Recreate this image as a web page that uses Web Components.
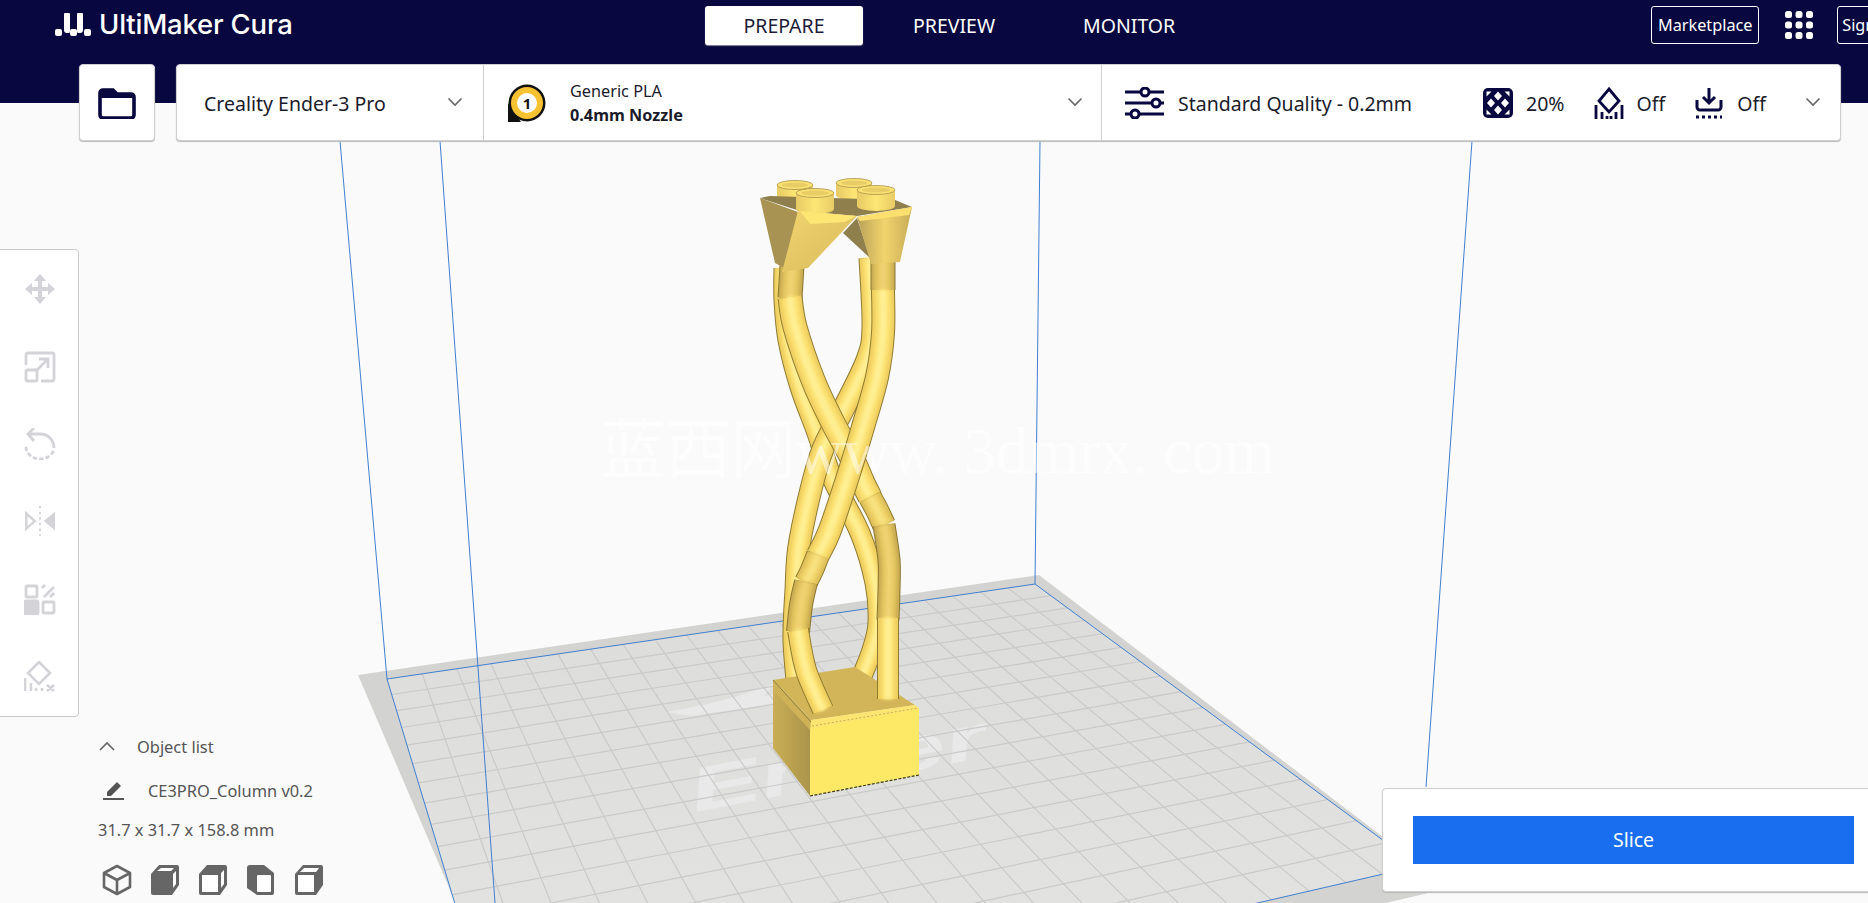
<!DOCTYPE html>
<html lang="en">
<head>
<meta charset="utf-8">
<title>UltiMaker Cura</title>
<style>
  html, body { margin: 0; height: 100%; overflow: hidden; background: #fafafa; }
</style>
</head>
<body>
<cura-app></cura-app>
<script>
const NAVY = '#08073f'

const ICONS = {
  folder: `<svg width="38" height="32" viewBox="0 0 38 32"><path d="M2 6a3 3 0 0 1 3-3h10l4 4h14a3 3 0 0 1 3 3v18a3 3 0 0 1-3 3H5a3 3 0 0 1-3-3z" fill="#fff" stroke="${NAVY}" stroke-width="3.6"/><path d="M2 6a3 3 0 0 1 3-3h10l4 4h14a3 3 0 0 1 3 3v1H2z" fill="${NAVY}"/></svg>`,
  chevron: `<svg width="16" height="10" viewBox="0 0 16 10"><path d="M1.5 1.5 8 8l6.5-6.5" fill="none" stroke="#666" stroke-width="1.6"/></svg>`,
  extruder: `<svg width="40" height="40" viewBox="0 0 40 40"><path d="M1 20v19h13z" fill="#111"/><circle cx="20" cy="20" r="18.500" fill="#111"/><circle cx="20" cy="20" r="16" fill="#f6c232"/><circle cx="20" cy="20" r="10" fill="#fff"/><text x="20" y="25.500" text-anchor="middle" font-family="Noto Sans" font-size="15" font-weight="700" fill="#111">1</text></svg>`,
  sliders: `<svg width="40" height="32" viewBox="0 0 40 32" fill="none" stroke="${NAVY}" stroke-width="3"><path d="M0 5h15M25 5h14M0 16h26M35 16h4M0 27h5M15 27h24"/><circle cx="20" cy="5" r="4"/><circle cx="31" cy="16" r="4"/><circle cx="10" cy="27" r="4"/></svg>`,
  infill: `<svg width="30" height="30" viewBox="0 0 30 30"><rect width="30" height="30" rx="5" fill="${NAVY}"/><g fill="#fff"><path d="M15 3.500l4 4.500-4 4.500-4-4.500zM15 17.500l4 4.500-4 4.500-4-4.500zM8 10.500l4 4.500-4 4.500-4-4.500zM22 10.500l4 4.500-4 4.500-4-4.500z"/><path d="M3.500 3.500h5l-5 5zM26.500 3.500h-5l5 5zM3.500 26.500h5l-5-5zM26.500 26.500h-5l5-5z"/></g></svg>`,
  support: `<svg width="30" height="32" viewBox="0 0 30 32" fill="none" stroke="${NAVY}" stroke-width="2.800"><path d="M15 2 25 14 15 25 5 14z"/><path d="M2 18v14M28 18v14M8 25v7M22 25v7M13 29v3M17 29v3"/></svg>`,
  adhesion: `<svg width="30" height="32" viewBox="0 0 30 32" fill="none" stroke="${NAVY}" stroke-width="3"><path d="M15 1v14M9 10l6 6 6-6"/><path d="M3 13v7a3 3 0 0 0 3 3h18a3 3 0 0 0 3-3v-7"/><path d="M2 30h26" stroke-dasharray="3 3"/></svg>`,
  apps: `<svg width="30" height="30" viewBox="0 0 30 30" fill="#fff"><rect x="1" y="1" width="7" height="7" rx="2.500"/><rect x="11.500" y="1" width="7" height="7" rx="2.500"/><rect x="22" y="1" width="7" height="7" rx="2.500"/><rect x="1" y="11.500" width="7" height="7" rx="2.500"/><rect x="11.500" y="11.500" width="7" height="7" rx="2.500"/><rect x="22" y="11.500" width="7" height="7" rx="2.500"/><rect x="1" y="22" width="7" height="7" rx="2.500"/><rect x="11.500" y="22" width="7" height="7" rx="2.500"/><rect x="22" y="22" width="7" height="7" rx="2.500"/></svg>`,
  move: `<svg viewBox="0 0 32 32" fill="#d3d3d8"><path d="M16 1l6 7h-4v6h6v-4l7 6-7 6v-4h-6v6h4l-6 7-6-7h4v-6H8v4l-7-6 7-6v4h6V8h-4z"/></svg>`,
  scale: `<svg viewBox="0 0 32 32" fill="none" stroke="#d3d3d8" stroke-width="2.800"><path d="M2 14V4a2 2 0 0 1 2-2h24a2 2 0 0 1 2 2v24a2 2 0 0 1-2 2H17"/><rect x="2" y="19" width="11" height="11" rx="1.500"/><path d="M13 19 24 8M15 8h9v9"/></svg>`,
  rotate: `<svg viewBox="0 0 32 32" fill="none" stroke="#d3d3d8" stroke-width="2.800"><path d="M30 20C30 12 24 6 16 6H5"/><path d="M10 0 4 6l6 7"/><path d="M2 20c1 6 7 11 14 11s12-4 14-9" stroke-dasharray="2 4.500" stroke-linecap="round"/></svg>`,
  mirror: `<svg viewBox="0 0 34 32" fill="#d3d3d8"><path d="M11.500 16 2.500 8v16z" fill="none" stroke="#d3d3d8" stroke-width="2.600"/><path d="M21 16 33 6v20z"/><path d="M17 0v32" stroke="#d3d3d8" stroke-width="2" stroke-dasharray="2.500 3.500"/></svg>`,
  permodel: `<svg viewBox="0 0 32 32" fill="none" stroke="#d3d3d8" stroke-width="2.800"><rect x="2" y="3" width="11" height="11" rx="1"/><path d="M20 14 30 4M18 5l3-3M26 14l4-4"/><rect x="1" y="18" width="13" height="13" rx="1" fill="#d3d3d8"/><rect x="19" y="19" width="11" height="11" rx="1"/></svg>`,
  blocker: `<svg viewBox="0 0 32 32" fill="none" stroke="#d3d3d8" stroke-width="2.600"><path d="M15 1 26 12 15 23 4 12z"/><path d="M1 17v13M7 22v8M12 27v3M18 27v3M23 24l7 6M30 24l-7 6"/></svg>`,
  pencil: `<svg width="22" height="20" viewBox="0 0 22 20"><path d="M4 12 14 2l4 4L8 16H4z" fill="#555"/><path d="M0 19h21" stroke="#555" stroke-width="2"/></svg>`
}

function cube (face) {
  if (face === 'iso') {
    return `<svg width="30" height="32" viewBox="0 0 30 32" fill="none" stroke="#666" stroke-width="2.600" stroke-linejoin="round"><path d="M15 2 28 9v14l-13 7-13-7V9zM2 9l13 7 13-7M15 16v14"/></svg>`
  }
  if (face === 'left') {
    return `<svg width="30" height="32" viewBox="0 0 30 32"><path d="M1 4q0-3 3-3h14l10 8v20q0 2-2 2H11L1 24z" fill="#666"/><rect x="11" y="11" width="14" height="17" rx="1" fill="#fff"/></svg>`
  }
  const white = {
    front: 'M7 7l4-3h13l-3 3zM23 10l3-3v13l-3 4z',
    top: 'M4 11h16v17H4zM23 9l3-3v14l-3 4z',
    right: 'M4 11h16v17H4zM10 4h15l-3 4H6z'
  }[face]
  return `<svg width="30" height="32" viewBox="0 0 30 32"><path d="M1 10 9 1h18q2 0 2 2v18l-7 10H3q-2 0-2-2z" fill="#666"/><path d="${white}" fill="#fff"/></svg>`
}

class CuraHeader extends HTMLElement {
  connectedCallback () {
    this.attachShadow({ mode: 'open' }).innerHTML = `
      <style>
        :host { display: block; height: 103px; background: ${NAVY}; color: #fff; font-family: "Noto Sans", sans-serif; position: relative; z-index: 2; }
        .top { display: flex; align-items: center; height: 50px; }
        .top > * { flex: none; }
        .logo { display: flex; align-items: center; gap: 8px; margin-left: 55px; width: 650px; font: 500 27.500px Inter, sans-serif; letter-spacing: -.2px; }
        .logo span { position: relative; top: -1px; }
        nav { display: flex; font-size: 19.500px; }
        nav a { display: flex; align-items: center; justify-content: center; height: 39px; border-radius: 3px; }
        nav a:nth-child(1) { width: 158px; background: #fff; color: #1c1c3a; margin-right: 50px; box-shadow: 0 1px 1px #8a8aa0; }
        nav a:nth-child(2) { margin-right: 88px; }
        .right { display: flex; align-items: center; margin-left: 476px; white-space: nowrap; }
        .right > * { flex: none; }
        .btn { border: 1px solid #fff; border-radius: 3px; height: 38px; display: flex; align-items: center; justify-content: center; font-size: 16.250px; box-sizing: border-box; }
        .market { width: 108px; margin-right: 25px; }
        .sign { width: 70px; margin-left: 23px; justify-content: flex-start; padding-left: 4px; }
        .apps { display: flex; }
      </style>
      <div class="top">
        <div class="logo">
          <svg width="36" height="24" viewBox="0 0 36 24" fill="#fff"><rect x="0" y="16" width="7" height="7" rx="2"/><rect x="15" y="16" width="7" height="7" rx="2"/><rect x="29" y="16" width="7" height="7" rx="2"/><path d="M9 1q0-1 1-1h4q1 0 1 1v17q0 2-1 2h-2q-3 0-3-3zM22 1q0-1 1-1h4q1 0 1 1v16q0 3-3 3h-2q-1 0-1-2z"/></svg>
          <span>UltiMaker Cura</span>
        </div>
        <nav><a>PREPARE</a><a>PREVIEW</a><a>MONITOR</a></nav>
        <div class="right">
          <div class="btn market">Marketplace</div>
          <div class="apps">${ICONS.apps}</div>
          <div class="btn sign">Sign in</div>
        </div>
      </div>
      <slot></slot>`
  }
}

class CuraActionBar extends HTMLElement {
  connectedCallback () {
    this.attachShadow({ mode: 'open' }).innerHTML = `
      <style>
        :host { display: flex; gap: 21px; margin: 14px 0 0 79px; height: 77px; color: #1b1b2b; font-family: "Noto Sans", sans-serif; font-size: 19.500px; }
        .box { background: #fff; border: 1px solid #cfcfcf; border-radius: 4px; box-sizing: border-box; height: 77px; box-shadow: 0 1px 1px #bbb; display: flex; align-items: center; }
        .open { width: 76px; justify-content: center; }
        .main { width: 1665px; }
        .cell { display: flex; align-items: center; height: 100%; box-sizing: border-box; border-right: 1px solid #cfcfcf; position: relative; flex: none; padding-top: 1px; }
        .printer { width: 307px; padding-left: 27px; }
        .material { width: 618px; padding-left: 23px; }
        .material .names { margin-left: 23px; font-size: 16.250px; line-height: 24px; }
        .material b { display: block; font-weight: 700; }
        .quality { flex: 1; border: 0; padding-left: 23px; white-space: nowrap; }
        .chev { position: absolute; right: 18px; top: 32px; line-height: 0; }
        .quality .chev { right: 19px; }
        .printer .chev { right: 20px; }
        .qname { margin-left: 13px; width: 305px; flex: none; }
        .stat { display: flex; align-items: center; gap: 13px; margin-right: 29px; }
      </style>
      <div class="box open">${ICONS.folder}</div>
      <div class="box main">
        <div class="cell printer">Creality Ender-3 Pro<span class="chev">${ICONS.chevron}</span></div>
        <div class="cell material">${ICONS.extruder}
          <div class="names">Generic PLA<b>0.4mm Nozzle</b></div>
          <span class="chev">${ICONS.chevron}</span>
        </div>
        <div class="cell quality">${ICONS.sliders}<span class="qname">Standard Quality - 0.2mm</span>
          <span class="stat">${ICONS.infill}20%</span>
          <span class="stat">${ICONS.support}Off</span>
          <span class="stat">${ICONS.adhesion}Off</span>
          <span class="chev">${ICONS.chevron}</span>
        </div>
      </div>`
  }
}

class CuraToolbar extends HTMLElement {
  connectedCallback () {
    const names = ['move', 'scale', 'rotate', 'mirror', 'permodel', 'blocker']
    this.attachShadow({ mode: 'open' }).innerHTML = `
      <style>
        :host { position: absolute; left: -4px; top: 249px; width: 83px; height: 468px; box-sizing: border-box; background: #fff; border: 1.500px solid #cbcbcb; border-radius: 4px; display: flex; flex-direction: column; justify-content: space-between; align-items: center; padding: 23px 0 23px 4px; }
        div { width: 32px; height: 32px; line-height: 0; }
      </style>
      ${names.map(n => `<div>${ICONS[n]}</div>`).join('')}`
  }
}

class CuraObjectList extends HTMLElement {
  connectedCallback () {
    this.attachShadow({ mode: 'open' }).innerHTML = `
      <style>
        :host { position: absolute; left: 98px; top: 734px; color: #555; font-family: "Noto Sans", sans-serif; font-size: 16.400px; display: flex; flex-direction: column; white-space: nowrap; }
        .row { display: flex; align-items: center; height: 24px; }
        .head svg { margin: 0 22px 0 1px; }
        .name { margin-top: 20px; }
        .name svg { margin: 0 23px 0 5px; }
        .dims { margin: 15px 0 23px; }
        .views { display: flex; gap: 18px; margin-left: 4px; }
      </style>
      <div class="row head"><svg width="16" height="10" viewBox="0 0 16 10"><path d="M1 9l7-7 7 7" fill="none" stroke="#666" stroke-width="1.600"/></svg>Object list</div>
      <div class="row name">${ICONS.pencil}CE3PRO_Column v0.2</div>
      <div class="row dims">31.7 x 31.7 x 158.8 mm</div>
      <div class="views">${['iso', 'front', 'top', 'left', 'right'].map(cube).join('')}</div>`
  }
}

class CuraSlicePanel extends HTMLElement {
  connectedCallback () {
    this.attachShadow({ mode: 'open' }).innerHTML = `
      <style>
        :host { position: absolute; left: 1382px; right: -20px; top: 788px; height: 104px; box-sizing: border-box; background: #fff; border: 1px solid #cfcfcf; border-radius: 4px; box-shadow: 0 1px 1px #bbb; padding: 27px 0 0 30px; font-family: "Noto Sans", sans-serif; }
        button { display: block; width: 441px; height: 48px; border: 0; background: #196ef0; color: #fff; font: 19.500px "Noto Sans", sans-serif; padding: 0 0 2px; }
      </style>
      <button>Slice</button>`
  }
}

// plate grid comes from a projective map of the unit square to the four blue corners
function homography ([p0, p1, p2, p3]) {
  const dx1 = p1[0] - p2[0]; const dx2 = p3[0] - p2[0]; const sx = p0[0] - p1[0] + p2[0] - p3[0]
  const dy1 = p1[1] - p2[1]; const dy2 = p3[1] - p2[1]; const sy = p0[1] - p1[1] + p2[1] - p3[1]
  const det = dx1 * dy2 - dx2 * dy1
  const g = (sx * dy2 - dx2 * sy) / det
  const h = (dx1 * sy - sx * dy1) / det
  const a = p1[0] - p0[0] + g * p1[0]; const b = p3[0] - p0[0] + h * p3[0]
  const d = p1[1] - p0[1] + g * p1[1]; const e = p3[1] - p0[1] + h * p3[1]
  return (u, v) => {
    const w = g * u + h * v + 1
    return [(a * u + b * v + p0[0]) / w, (d * u + e * v + p0[1]) / w].map(n => n.toFixed(1))
  }
}

function smooth (pts) {
  let d = `M${pts[0]}`
  for (let i = 0; i < pts.length - 1; i++) {
    const p0 = pts[i - 1] || pts[i]; const p1 = pts[i]; const p2 = pts[i + 1]; const p3 = pts[i + 2] || p2
    d += `C${p1[0] + (p2[0] - p0[0]) / 6} ${p1[1] + (p2[1] - p0[1]) / 6} ${p2[0] - (p3[0] - p1[0]) / 6} ${p2[1] - (p3[1] - p1[1]) / 6} ${p2[0]} ${p2[1]}`
  }
  return d
}

const BRIGHT = ['#8f7b30', '#edcd5f', '#fbe06f', '#ffef93']
const MID = ['#8d7930', '#dcbe58', '#efd267', '#f8e17f']
const GOLD = ['#8a7630', '#c9ac52', '#e3c55f', '#efd271']

function strand (pts, w, tone = BRIGHT) {
  const d = smooth(pts)
  return [w, w - 2, w - 8, w * 0.3].map((sw, i) =>
    `<path d="${d}" fill="none" stroke="${tone[i]}" stroke-width="${sw}"${i > 1 ? ' filter="url(#soft)"' : ''}/>`).join('')
}

function stud (cx, cy, rx, h) {
  return `<path d="M${cx - rx} ${cy}v${h}a${rx} 5 0 0 0 ${rx * 2} 0v-${h}z" fill="url(#studFill)"/>
    <ellipse cx="${cx}" cy="${cy}" rx="${rx}" ry="4.500" fill="#fbe272" stroke="#a8924a" stroke-width=".8"/>
    <ellipse cx="${cx}" cy="${cy}" rx="${rx - 5}" ry="2.500" fill="#e8cc66"/>`
}

class CuraStage extends HTMLElement {
  connectedCallback () {
    const map = homography([[387, 679], [1035, 584], [1418, 866], [507, 1076]])
    const cols = 21
    const rows = 17
    let grid = ''
    for (let i = 1; i < cols; i++) grid += `M${map(i / cols, 0)}L${map(i / cols, 1)}`
    for (let i = 1; i < rows; i++) grid += `M${map(0, i / rows)}L${map(1, i / rows)}`
    this.attachShadow({ mode: 'open' }).innerHTML = `
      <style>
        :host { position: absolute; inset: 0; display: block; }
        svg { display: block; }
      </style>
      <svg width="1868" height="903" viewBox="0 0 1868 903">
        <defs>
          <filter id="soft" filterUnits="userSpaceOnUse" x="700" y="150" width="260" height="600"><feGaussianBlur stdDeviation="1.500"/></filter>
          <linearGradient id="studFill" x1="0" x2="1" y1="0" y2="0"><stop offset="0" stop-color="#e6c964"/><stop offset=".5" stop-color="#fde675"/><stop offset="1" stop-color="#e8cb66"/></linearGradient>
          <linearGradient id="flareL" x1="0" x2="1" y1="0" y2="1"><stop offset="0" stop-color="#f2d570"/><stop offset="1" stop-color="#d7b95b"/></linearGradient>
          <linearGradient id="flareR" x1="0" x2="1" y1="0" y2="0"><stop offset="0" stop-color="#b9a158"/><stop offset=".5" stop-color="#f1d46d"/><stop offset="1" stop-color="#c7ac58"/></linearGradient>
          <linearGradient id="blockL" x1="0" x2="1" y1="0" y2="0"><stop offset="0" stop-color="#c9ae55"/><stop offset="1" stop-color="#ab944b"/></linearGradient>
          <linearGradient id="plate" x1="0" x2="0" y1="0" y2="1"><stop offset="0" stop-color="#dcdcdb"/><stop offset="1" stop-color="#e5e5e4"/></linearGradient>
        </defs>
        <polygon points="358,675 1039,575 1450,888 540,1100" fill="#d3d3d1"/>
        <polygon points="387,679 1035,584 1418,866 507,1076" fill="url(#plate)"/>
        <g fill="#e9e9e9">
          <path d="M666 712q50-8 90-22l18-6-10 12 62-10-10 8q-60 14-100 18l-24 4z"/>
          <text transform="matrix(.983 -.186 .25 .97 695 812)" font-family="Liberation Sans" font-weight="700" font-style="italic" font-size="62" textLength="300" lengthAdjust="spacingAndGlyphs">Ender</text>
        </g>
        <path d="${grid}" fill="none" stroke="#cacaca" stroke-width="1.200"/>
        <g fill="none" stroke="#3f7fd0" stroke-width="1">
          <path d="M387 679 1035 584 1418 866 507 1076z"/>
          <path d="M340 141 387 679M440 141 495 903M1040 141 1035 584M1472 141 1426 787"/>
        </g>

        <!-- back strands -->
        ${strand([[784, 268], [784, 300], [788, 340], [800, 387], [817, 433], [833, 480], [860, 533], [875, 583], [878, 623], [872, 650], [862, 676]], 21)}
        ${strand([[870, 258], [873, 327], [867, 360], [843, 410], [820, 457], [800, 540], [796, 590], [794, 640], [798, 690]], 23)}

        <!-- foot block -->
        <polygon points="773,680 855,667 915,705 812,720" fill="#d2b558"/>
        <polygon points="773,680 812,720 811,733 773,691" fill="#cfb257"/>
        <polygon points="811,720 915,705 919,708 919,715 810,733" fill="#fce671"/>
        <polygon points="773,690 810,730 810,796 773,748" fill="url(#blockL)"/>
        <polygon points="810,729 919,709 919,775 810,796" fill="#fee966"/>
        <path d="M810 796 919 775" stroke="#3f3a1a" stroke-width="1.200" stroke-dasharray="3 1.500" fill="none"/>
        <path d="M812 726 918 708" stroke="#b89f48" stroke-width=".8" stroke-dasharray="2 2" fill="none"/>
        <path d="M773 680 811 722" stroke="#8f7d3a" stroke-width="1" fill="none"/>

        <!-- front strands -->
        ${strand([[792, 266], [790, 298]], 25, GOLD)}
        ${strand([[790, 297], [795, 327], [813, 380], [833, 423], [853, 460], [863, 483], [870, 497]], 25)}
        ${strand([[870, 497], [877, 510], [884, 525]], 24, MID)}
        ${strand([[884, 525], [889, 560], [889, 590], [888, 620]], 23, GOLD)}
        ${strand([[888, 618], [888, 660], [888, 699]], 22)}
        ${strand([[883, 260], [883, 290]], 25, GOLD)}
        ${strand([[883, 290], [883, 333], [877, 377], [863, 427], [850, 470], [830, 530], [818, 555]], 24)}
        ${strand([[818, 555], [812, 570], [806, 582]], 24, MID)}
        ${strand([[806, 582], [801, 605], [798, 632]], 24, GOLD)}
        ${strand([[798, 630], [806, 670], [823, 710]], 22)}

        <!-- head -->
        ${stud(795, 185, 18, 12)}
        ${stud(854, 183, 18, 12)}
        <polygon points="760,198 770,196 895,200 912,207 857,216 800,211" fill="#8e7f4c"/>
        ${stud(815, 193, 19, 16)}
        ${stud(876, 190, 19, 16)}
        <polygon points="760,198 798,212 788,270 775,263" fill="#a99353"/>
        <polygon points="798,211 857,216 808,268 782,272" fill="url(#flareL)"/>
        <polygon points="800,211 856,216 845,222 810,224" fill="#fde674"/>
        <polygon points="843,233 857,218 870,258" fill="#8e7f4c"/>
        <polygon points="857,217 912,207 900,262 871,264" fill="url(#flareR)"/>
        <polygon points="857,217 912,207 909,215 860,221" fill="#fbe070"/>

        <text x="600" y="473" font-family="Liberation Serif, Noto Sans CJK SC, serif" font-size="66" fill="#fff" fill-opacity=".5" textLength="675" lengthAdjust="spacing">蓝西网www. 3dmrx. com</text>
      </svg>`
  }
}

class CuraApp extends HTMLElement {
  connectedCallback () {
    this.attachShadow({ mode: 'open' }).innerHTML = `
      <style>
        :host { display: block; position: relative; width: 1868px; height: 903px; overflow: hidden; background: #fafafa; }
      </style>
      <cura-stage></cura-stage>
      <cura-header><cura-action-bar></cura-action-bar></cura-header>
      <cura-toolbar></cura-toolbar>
      <cura-object-list></cura-object-list>
      <cura-slice-panel></cura-slice-panel>`
  }
}

customElements.define('cura-stage', CuraStage)
customElements.define('cura-header', CuraHeader)
customElements.define('cura-action-bar', CuraActionBar)
customElements.define('cura-toolbar', CuraToolbar)
customElements.define('cura-object-list', CuraObjectList)
customElements.define('cura-slice-panel', CuraSlicePanel)
customElements.define('cura-app', CuraApp)
</script>
</body>
</html>
